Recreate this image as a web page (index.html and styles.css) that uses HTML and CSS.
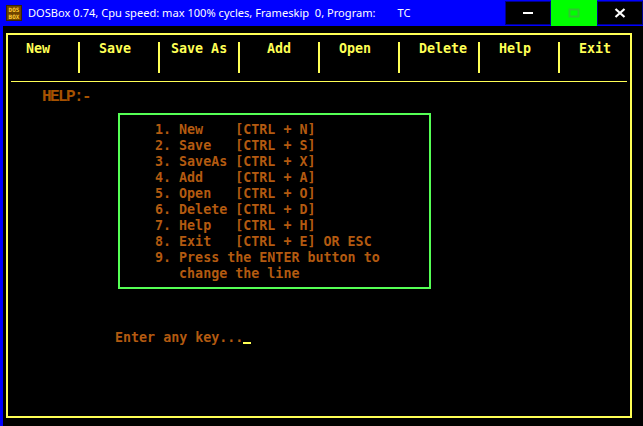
FILE: index.html
```html
<!DOCTYPE html>
<html>
<head>
<meta charset="utf-8">
<link rel="stylesheet" href="styles.css">
</head>
<body>
<div class="window">
  <div class="titlebar">
    <svg class="logo" width="16" height="16" viewBox="0 0 16 16">
      <rect x="0" y="0" width="16" height="16" fill="#6e4400"/>
      <rect x="0.5" y="0.5" width="15" height="15" fill="none" stroke="#3a2400"/>
      <text x="8" y="7" font-family="DejaVu Sans Mono, monospace" font-size="6" font-weight="bold" fill="#ffcc33" text-anchor="middle">DOS</text>
      <text x="8" y="14" font-family="DejaVu Sans Mono, monospace" font-size="6" font-weight="bold" fill="#ffcc33" text-anchor="middle">BOX</text>
    </svg>
    <div class="title">DOSBox 0.74, Cpu speed: max 100% cycles, Frameskip  0, Program:<span class="prog">TC</span></div>
    <div class="controls">
      <div class="btn btn-min">
        <svg width="12" height="4" viewBox="0 0 12 4"><rect x="1" y="1" width="10" height="2" fill="#fff"/></svg>
      </div>
      <div class="btn btn-max">
        <svg width="12" height="10" viewBox="0 0 12 10"><rect x="1.5" y="1.5" width="9" height="7" fill="none" stroke="#2fc62f" stroke-width="2"/></svg>
      </div>
      <div class="btn btn-close">
        <svg width="12" height="10" viewBox="0 0 12 10"><path d="M1.5 1 L10.5 9 M10.5 1 L1.5 9" stroke="#fff" stroke-width="2.2" fill="none"/></svg>
      </div>
    </div>
  </div>
  <div class="screen">
    <div class="frame">
      <div class="menu">
        <div class="item item-new">New</div>
        <div class="item">Save</div>
        <div class="item item-saveas">Save As</div>
        <div class="item item-add">Add</div>
        <div class="item">Open</div>
        <div class="item">Delete</div>
        <div class="item">Help</div>
        <div class="item item-last">Exit</div>
      </div>
      <div class="rule"></div>
      <div class="help-title">HELP:-</div>
      <div class="help-box">
<pre class="help-list">1. New    [CTRL + N]
2. Save   [CTRL + S]
3. SaveAs [CTRL + X]
4. Add    [CTRL + A]
5. Open   [CTRL + O]
6. Delete [CTRL + D]
7. Help   [CTRL + H]
8. Exit   [CTRL + E] OR ESC
9. Press the ENTER button to
   change the line</pre>
      </div>
      <div class="prompt">Enter any key...<span class="cursor"></span></div>
    </div>
  </div>
</div>
</body>
</html>
```
FILE: styles.css
```css
html, body {
  margin: 0;
  padding: 0;
  background: #000;
}
body {
  width: 643px;
  height: 426px;
  overflow: hidden;
}
.window {
  width: 643px;
  height: 426px;
  display: flex;
  flex-direction: column;
  background: #000;
}
.titlebar {
  height: 26px;
  background: #0000ff;
  display: flex;
  align-items: center;
  flex-shrink: 0;
}
.logo {
  margin-left: 6px;
  flex-shrink: 0;
}
.title {
  margin-left: 6px;
  color: #fff;
  font-family: "Noto Sans", "Open Sans", sans-serif;
  font-size: 11.1px;
  white-space: pre;
  flex: 1;
  line-height: 16px;
}
.prog {
  margin-left: 22px;
}
.controls {
  display: flex;
  align-self: stretch;
}
.btn {
  width: 46px;
  display: flex;
  align-items: center;
  justify-content: center;
  box-sizing: border-box;
}
.btn-min, .btn-close {
  margin: 1px 0 1px 0;
  background: #000;
  border: 1px solid #00008a;
}
.btn-max {
  background: #00ff00;
}
.screen {
  flex: 1;
  border-left: 3px solid #0000ff;
  display: flex;
}
.frame {
  margin: 7px 0 0 3px;
  width: 626px;
  height: 385px;
  box-sizing: border-box;
  border: 2px solid #ffff55;
  display: flex;
  flex-direction: column;
}
.menu {
  margin-top: 7px;
  height: 31px;
  display: flex;
  font-family: "DejaVu Sans Mono", monospace;
  font-weight: bold;
  font-size: 13.33px;
  line-height: 14px;
  color: #ffff55;
}
.item {
  flex: 0 0 80px;
  border-right: 2px solid #ffff55;
  padding-left: 19px;
  box-sizing: border-box;
}
.item-new {
  flex-basis: 72px;
  padding-left: 18px;
}
.item-saveas {
  padding-left: 11px;
}
.item-add {
  padding-left: 27px;
}
.item-last {
  flex: 1 1 auto;
  border-right: none;
}
.rule {
  margin: 8px 3px 0 3px;
  height: 1px;
  background: #ffff55;
}
.help-title {
  margin: 7px 0 0 34px;
  font-family: "Liberation Mono", monospace;
  font-weight: bold;
  font-size: 16px;
  letter-spacing: -1.6px;
  line-height: 16px;
  color: #a65200;
}
.help-box {
  margin: 8px 0 0 110px;
  width: 313px;
  height: 176px;
  box-sizing: border-box;
  border: 2px solid #55ff55;
  padding: 7px 0 0 35px;
}
.help-list {
  margin: 0;
  font-family: "DejaVu Sans Mono", monospace;
  font-weight: bold;
  font-size: 13.33px;
  line-height: 16px;
  color: #b35a10;
}
.prompt {
  margin: 41px 0 0 107px;
  font-family: "DejaVu Sans Mono", monospace;
  font-weight: bold;
  font-size: 13.33px;
  line-height: 16px;
  color: #b35a10;
  white-space: pre;
}
.cursor {
  display: inline-block;
  width: 8px;
  height: 2px;
  background: #ffff55;
  vertical-align: -2px;
}
```
